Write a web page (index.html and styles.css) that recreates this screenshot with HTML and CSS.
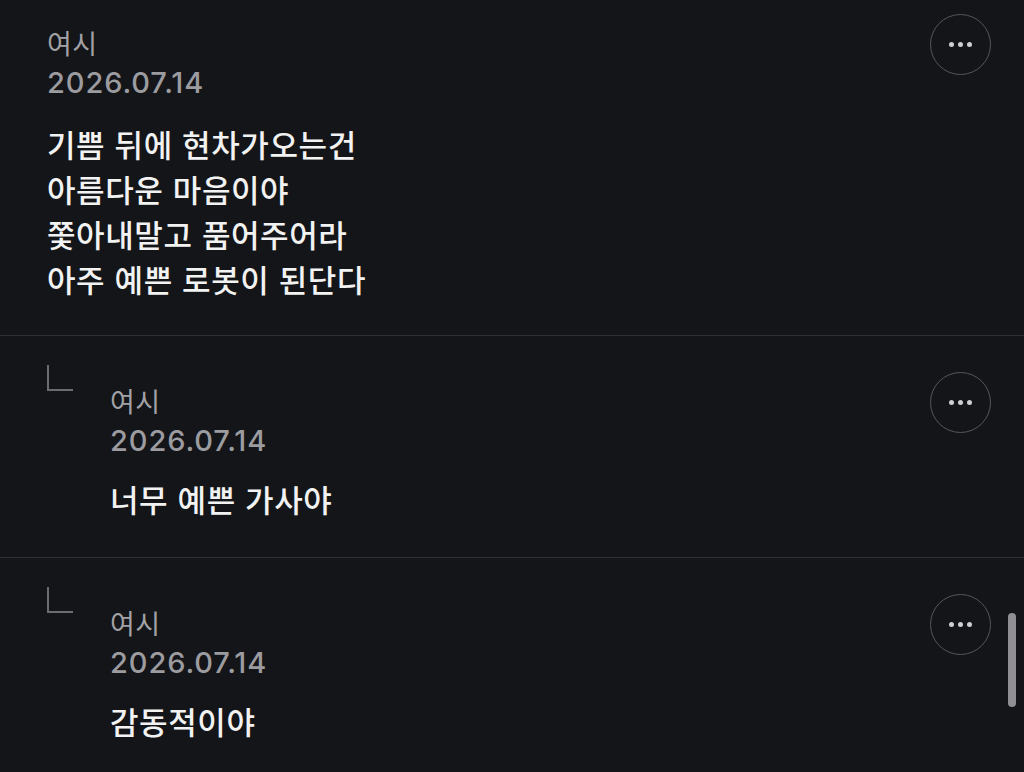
FILE: index.html
```html
<!DOCTYPE html>
<html lang="ko">
<head>
<meta charset="utf-8">
<title>댓글</title>
<link rel="stylesheet" href="styles.css">
</head>
<body>
<main class="comments">
  <article class="comment">
    <div class="comment-body">
      <div class="author">여시</div>
      <div class="date">2026.07.14</div>
      <p class="text">기쁨 뒤에 현차가오는건<br>아름다운 마음이야<br>쫓아내말고 품어주어라<br>아주 예쁜 로봇이 된단다</p>
    </div>
    <button class="more" aria-label="더보기"><span></span><span></span><span></span></button>
  </article>

  <article class="comment reply">
    <span class="reply-mark"></span>
    <div class="comment-body">
      <div class="author">여시</div>
      <div class="date">2026.07.14</div>
      <p class="text">너무 예쁜 가사야</p>
    </div>
    <button class="more" aria-label="더보기"><span></span><span></span><span></span></button>
  </article>

  <article class="comment reply">
    <span class="reply-mark"></span>
    <div class="comment-body">
      <div class="author">여시</div>
      <div class="date">2026.07.14</div>
      <p class="text">감동적이야</p>
    </div>
    <button class="more" aria-label="더보기"><span></span><span></span><span></span></button>
  </article>
</main>
<div class="scrollbar"></div>
</body>
</html>
```

FILE: styles.css
```css
html, body {
  margin: 0;
  padding: 0;
  background: #141518;
  height: 100%;
  overflow: hidden;
}

body {
  font-family: "Noto Sans CJK KR", "Noto Sans", sans-serif;
  color: #f2f2f2;
}

.comments {
  display: flex;
  flex-direction: column;
}

.comment {
  display: flex;
  align-items: flex-start;
  padding: 14px 33px 34px 47px;
  border-bottom: 1px solid #2f3034;
}

.comment.reply {
  padding-top: 29px;
  padding-bottom: 36px;
}

.comment-body {
  flex: 1;
  padding-top: 9px;
}

.reply .comment-body {
  padding-top: 16px;
  padding-left: 37px;
}

.reply-mark {
  width: 24px;
  height: 24px;
  border-left: 2px solid #6c6c70;
  border-bottom: 2px solid #6c6c70;
  flex: none;
}

.author {
  font-size: 27px;
  line-height: 40px;
  color: #a2a2a6;
  font-weight: 400;
  letter-spacing: 0.5px;
}

.date {
  font-family: "Inter", "Noto Sans", sans-serif;
  font-size: 29px;
  line-height: 40px;
  color: #9c9ca0;
  font-weight: 500;
  letter-spacing: 0.9px;
}

.text {
  margin: 18px 0 0;
  font-size: 31px;
  line-height: 45px;
  font-weight: 500;
  letter-spacing: 0.6px;
}

.reply .text {
  margin-top: 15px;
}

.more {
  width: 61px;
  height: 61px;
  flex: none;
  border: 1.5px solid #56565a;
  border-radius: 50%;
  background: transparent;
  display: flex;
  align-items: center;
  justify-content: center;
  gap: 4px;
  padding: 0;
}

.reply .more {
  margin-top: 7px;
}

.more span {
  width: 5px;
  height: 5px;
  border-radius: 50%;
  background: #cfcfd2;
}

.scrollbar {
  position: fixed;
  left: 1008px;
  top: 613px;
  width: 8px;
  height: 94px;
  border-radius: 4px;
  background: #909094;
}
```
